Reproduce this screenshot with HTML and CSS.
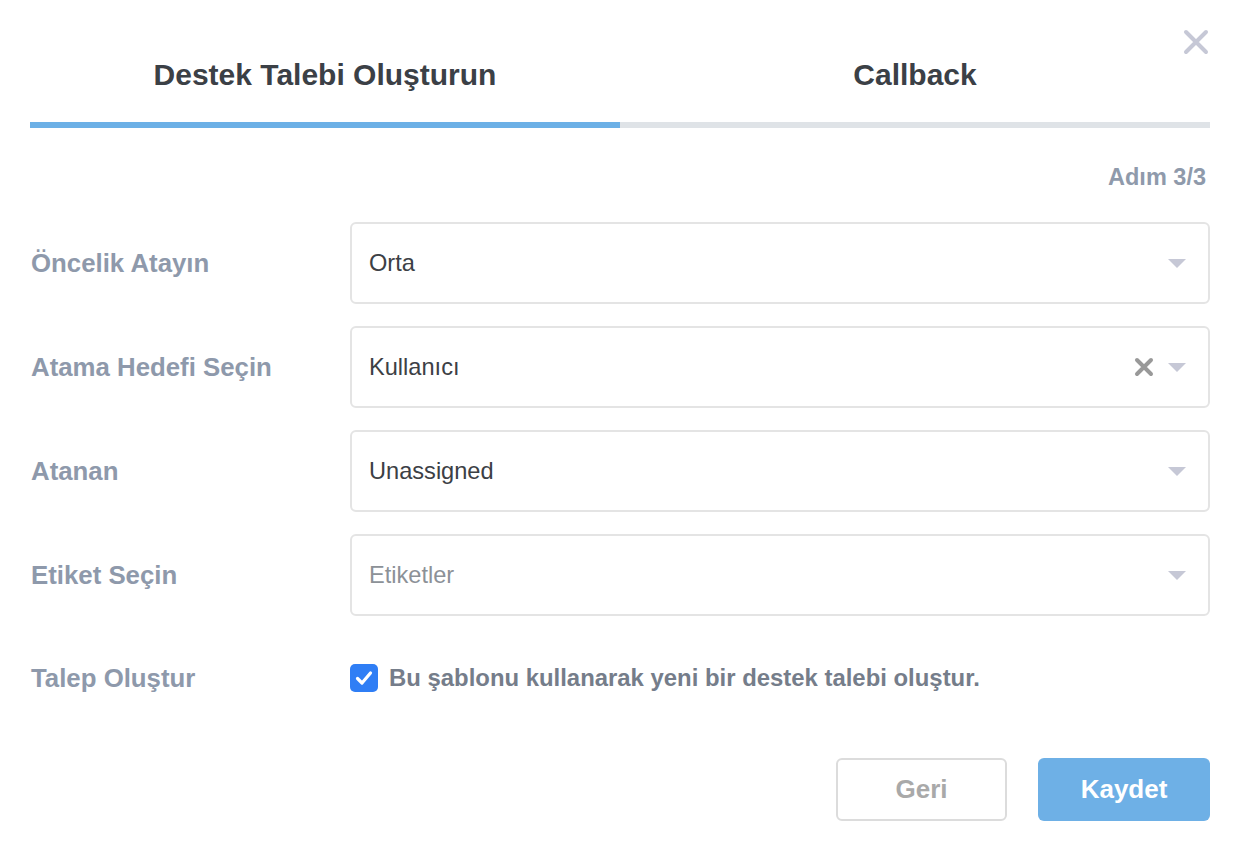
FILE: index.html
```html
<!DOCTYPE html>
<html>
<head>
<meta charset="utf-8">
<link rel="stylesheet" href="styles.css">
</head>
<body>
<div class="modal">
  <button class="close" aria-label="close">
    <svg width="26" height="26" viewBox="0 0 26 26"><path d="M3 3L23 23M23 3L3 23" stroke="#c6c8d6" stroke-width="4" stroke-linecap="round"/></svg>
  </button>
  <div class="tabs">
    <div class="tab active">Destek Talebi Oluşturun</div>
    <div class="tab">Callback</div>
  </div>
  <div class="step">Adım 3/3</div>
  <div class="form">
    <div class="row">
      <div class="label">Öncelik Atayın</div>
      <div class="select"><span class="value">Orta</span><span class="icons"><span class="caret"></span></span></div>
    </div>
    <div class="row">
      <div class="label">Atama Hedefi Seçin</div>
      <div class="select"><span class="value">Kullanıcı</span><span class="icons">
        <svg class="clear" width="20" height="20" viewBox="0 0 20 20"><path d="M3 3L17 17M17 3L3 17" stroke="#999" stroke-width="4" stroke-linecap="round"/></svg>
        <span class="caret"></span></span></div>
    </div>
    <div class="row">
      <div class="label">Atanan</div>
      <div class="select"><span class="value">Unassigned</span><span class="icons"><span class="caret"></span></span></div>
    </div>
    <div class="row">
      <div class="label">Etiket Seçin</div>
      <div class="select"><span class="value placeholder">Etiketler</span><span class="icons"><span class="caret"></span></span></div>
    </div>
    <div class="row check-row">
      <div class="label">Talep Oluştur</div>
      <label class="check">
        <span class="box"><svg width="18" height="16" viewBox="0 0 18 16"><path d="M2.5 8.5L7 13L15.5 3" stroke="#fff" stroke-width="3.2" fill="none" stroke-linecap="round" stroke-linejoin="round"/></svg></span>
        <span class="check-text">Bu şablonu kullanarak yeni bir destek talebi oluştur.</span>
      </label>
    </div>
  </div>
  <div class="actions">
    <button class="btn secondary">Geri</button>
    <button class="btn primary">Kaydet</button>
  </div>
</div>
</body>
</html>
```

FILE: styles.css
```css
* { box-sizing: border-box; }
html, body { margin: 0; padding: 0; background: #fff; }
body { font-family: "Liberation Sans", Arial, Helvetica, sans-serif; }
.modal { position: relative; width: 1238px; height: 842px; padding: 0 28px 0 30px; }
.close { position: absolute; top: 29px; right: 29px; background: none; border: 0; padding: 0; width: 26px; height: 26px; cursor: pointer; }
.close svg { display: block; }
.tabs { display: flex; padding-top: 55px; }
.tab { flex: 1; text-align: center; font-size: 30px; font-weight: 700; color: #3b4046; line-height: 40px; padding-bottom: 27px; border-bottom: 6px solid #dfe3e7; }
.tab.active { border-bottom-color: #6cb0e6; }
.step { text-align: right; padding-right: 4px; margin-top: 37px; font-size: 23.5px; font-weight: 700; color: #8f9aab; line-height: 24px; }
.form { margin-top: 33px; display: flex; flex-direction: column; gap: 22px; }
.row { display: flex; align-items: center; }
.label { width: 320px; flex: none; padding-left: 1px; font-size: 25.8px; font-weight: 700; color: #8e99ab; }
.select { flex: 1; height: 82px; border: 2px solid #e4e4e4; border-radius: 6px; display: flex; align-items: center; padding: 0 22px 0 17px; }
.value { flex: 1; font-size: 23.6px; color: #3c4045; }
.value.placeholder { color: #8c9197; }
.icons { display: flex; align-items: center; gap: 14px; }
.caret { width: 0; height: 0; border-left: 9px solid transparent; border-right: 9px solid transparent; border-top: 9px solid #c6c8d6; }
.clear { display: block; }
.check-row { margin-top: 20px; height: 40px; }
.check { display: flex; align-items: center; gap: 11px; }
.box { width: 28px; height: 28px; border-radius: 5px; background: #2f7ef5; display: flex; align-items: center; justify-content: center; }
.check-text { font-size: 23.9px; font-weight: 700; color: #757d8a; }
.actions { display: flex; justify-content: flex-end; gap: 31px; margin-top: 60px; }
.btn { height: 63px; border-radius: 6px; font-family: inherit; font-size: 26px; font-weight: 700; }
.btn.secondary { width: 171px; background: #fff; border: 2px solid #dcdcdc; color: #a9a9a9; }
.btn.primary { width: 172px; background: #6eb0e6; border: 0; color: #fff; }
```
